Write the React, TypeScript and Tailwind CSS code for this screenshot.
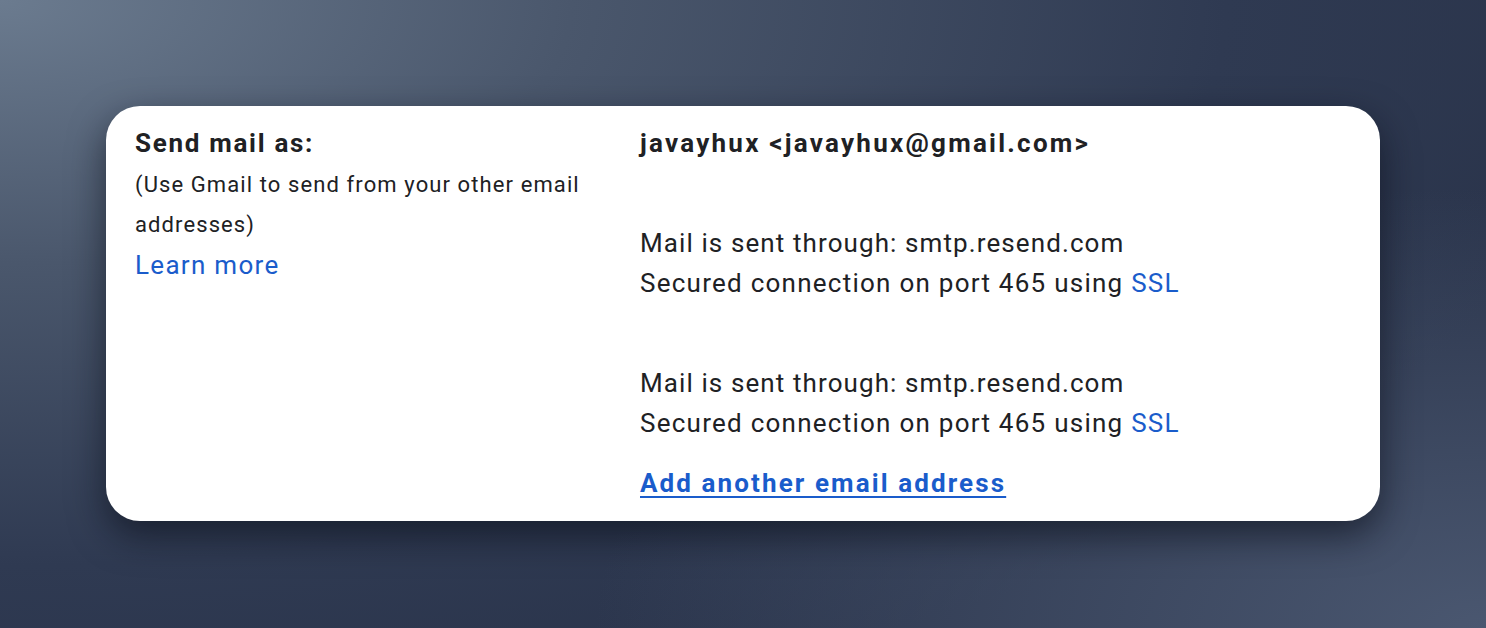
import React from "react";

export default function App() {
  return (
    <div
      className="w-[1486px] h-[628px] overflow-hidden pt-[106px] pl-[106px] bg-[radial-gradient(ellipse_60%_70%_at_100%_100%,#4a5770_0%,rgba(74,87,112,0)_100%),radial-gradient(ellipse_110%_120%_at_0%_0%,#6b7b8f_0%,#4a576c_35%,#2f3a52_75%,#2a344b_100%)]"
      style={{ fontFamily: "Roboto, 'Noto Sans', Arial, sans-serif" }}
    >
      <div className="w-[1274px] h-[415px] bg-white rounded-[34px] shadow-[0_14px_36px_rgba(8,12,22,0.6)] flex pt-[17px] pl-[29px] text-[#202124]">
        <div className="w-[505px] flex flex-col">
          <div className="h-[40px] leading-[40px] text-[26px] font-bold tracking-[1.7px]">Send mail as:</div>
          <div className="mt-[2px] text-[22px] leading-[40px] tracking-[1.1px]">
            (Use Gmail to send from your other email
            <br />
            addresses)
          </div>
          <div className="text-[26px] leading-[40px] tracking-[1.3px] text-[#1a5ccb]">Learn more</div>
        </div>
        <div className="flex flex-col">
          <div className="h-[40px] leading-[40px] text-[26px] font-bold tracking-[2.25px]">
            javayhux &lt;javayhux@gmail.com&gt;
          </div>
          <div className="mt-[60px] text-[26px] leading-[40px] tracking-[1.1px]">
            <div>Mail is sent through: smtp.resend.com</div>
            <div className="tracking-[1.25px]">
              Secured connection on port 465 using <span className="text-[#1a5ccb]">SSL</span>
            </div>
          </div>
          <div className="mt-[60px] text-[26px] leading-[40px] tracking-[1.1px]">
            <div>Mail is sent through: smtp.resend.com</div>
            <div className="tracking-[1.25px]">
              Secured connection on port 465 using <span className="text-[#1a5ccb]">SSL</span>
            </div>
          </div>
          <div className="mt-[20px] text-[26px] leading-[40px] font-bold tracking-[2.1px] text-[#1a5ccb] underline underline-offset-[4px] decoration-[2px]">
            Add another email address
          </div>
        </div>
      </div>
    </div>
  );
}
